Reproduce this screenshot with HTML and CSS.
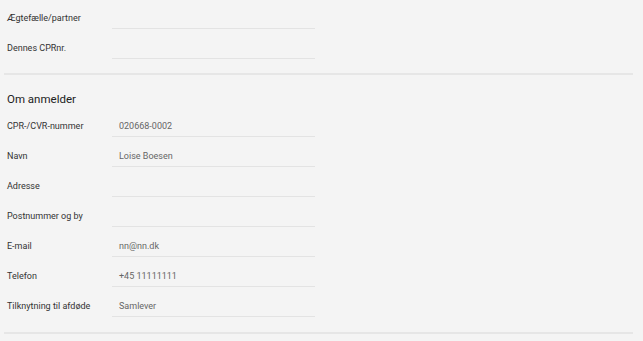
FILE: index.html
```html
<!DOCTYPE html>
<html lang="da">
<head>
<meta charset="utf-8">
<link rel="stylesheet" href="styles.css">
</head>
<body>
<div class="page">
  <section class="group">
    <div class="row"><span class="label">Ægtefælle/partner</span><span class="field"></span></div>
    <div class="row"><span class="label">Dennes CPRnr.</span><span class="field"></span></div>
  </section>
  <hr class="divider">
  <section class="group">
    <h2 class="heading">Om anmelder</h2>
    <div class="row"><span class="label">CPR-/CVR-nummer</span><span class="field">020668-0002</span></div>
    <div class="row"><span class="label">Navn</span><span class="field">Loise Boesen</span></div>
    <div class="row"><span class="label">Adresse</span><span class="field"></span></div>
    <div class="row"><span class="label">Postnummer og by</span><span class="field"></span></div>
    <div class="row"><span class="label">E-mail</span><span class="field">nn@nn.dk</span></div>
    <div class="row"><span class="label">Telefon</span><span class="field">+45 11111111</span></div>
    <div class="row"><span class="label">Tilknytning til afdøde</span><span class="field">Samlever</span></div>
  </section>
  <hr class="divider divider-end">
</div>
</body>
</html>
```
FILE: styles.css
```css
html, body {
  margin: 0;
  padding: 0;
  background: #f4f4f4;
}
body {
  font-family: Roboto, "Noto Sans", sans-serif;
  color: #333;
}
.page {
  width: 643px;
  height: 341px;
  overflow: hidden;
}
.group {
  padding-left: 7px;
}
.row {
  display: grid;
  grid-template-columns: 105px 203px;
  margin-bottom: 1px;
}
.label,
.field {
  height: 28px;
  padding-top: 12px;
  box-sizing: border-box;
  line-height: 12px;
  font-size: 9px;
}
.label {
  color: #333;
}
.field {
  height: 29px;
  border-bottom: 1px solid #e3e3e3;
  padding-left: 7px;
  color: #666;
}
.divider {
  border: 0;
  height: 2px;
  background: #e6e6e6;
  margin: 14px 10px 0 4px;
}
.divider-end {
  margin-top: 15px;
}
.heading {
  margin: 16px 0 1px;
  font-size: 11.5px;
  line-height: 16px;
  font-weight: 400;
  color: #222;
}
```
